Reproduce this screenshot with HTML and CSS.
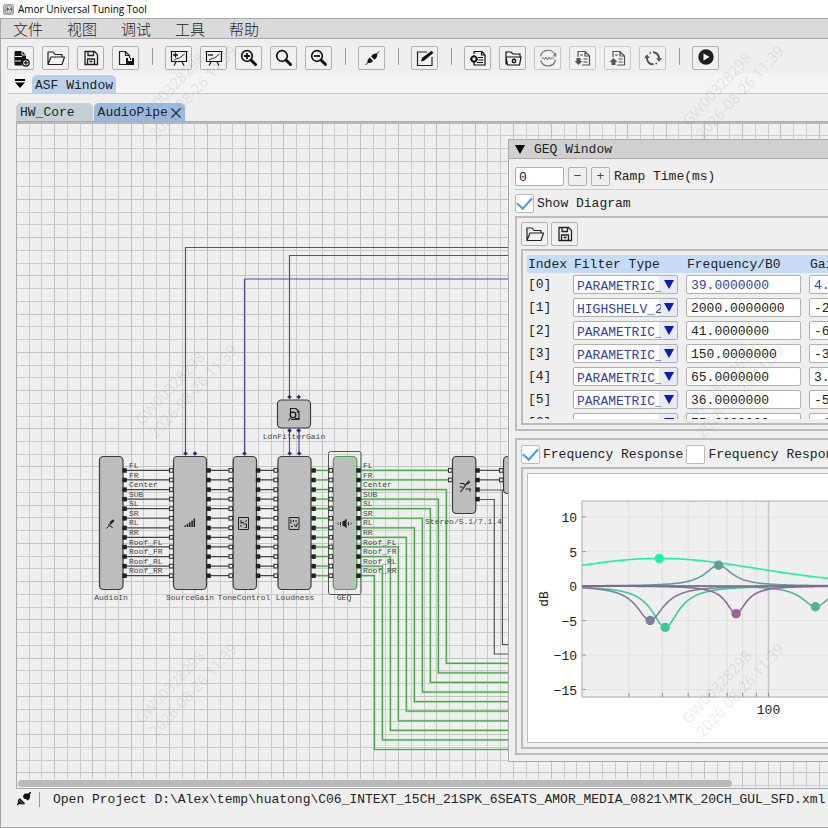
FILE: index.html
```html
<!DOCTYPE html>
<html lang="zh-CN">
<head>
<meta charset="utf-8">
<title>Amor Universal Tuning Tool</title>
<link rel="stylesheet" href="styles.css">
</head>
<body>
<header class="titlebar">
  <svg class="app-icon" viewBox="0 0 12 12"><rect x=".5" y=".5" width="11" height="11" rx="2" fill="#c4c4c4" stroke="#999"/><circle cx="6" cy="6" r="4.2" fill="#e8e8e8" stroke="#888"/><path d="M2.5 8 5 4v4m0-4 2 3 2-3v4" fill="none" stroke="#555"/></svg>
  <h1>Amor Universal Tuning Tool</h1>
</header>
<div class="app">
  <nav class="menubar">
    <button>文件</button><button>视图</button><button>调试</button><button>工具</button><button>帮助</button>
  </nav>
  <div class="toolbar">
    <button class="tool" aria-label="New"><svg viewBox="0 0 20 20"><path d="M3.500 4Q3.500 3 4.500 3H11l4 4v4.500a4.500 4.500 0 0 0-4 6H4.500q-1 0-1-1Z" fill="#111"/><path d="M11 3v4h4M4 8.500h7M4 13h6" stroke="#efefef" fill="none"/><circle cx="14.800" cy="14.800" r="3.300" fill="#efefef" stroke="#111" stroke-width="1.300"/><path d="M12.800 14.800h4m-2-2v4" stroke="#111" stroke-width="1.200"/></svg></button>
    <button class="tool" aria-label="Open"><svg viewBox="0 0 20 20"><use href="#folder"/></svg></button>
    <button class="tool" aria-label="Save"><svg viewBox="0 0 20 20"><use href="#disk"/></svg></button>
    <button class="tool" aria-label="Save as"><svg viewBox="0 0 20 20"><path d="M10 16.500H3.500v-13h6l4 4V10M9.500 3.500v4h4" fill="none" stroke="#222" stroke-width="1.200"/><path d="M10 10h2v3h4v-3h2v7h-8Z" fill="#111"/><path d="M14 10h1.200v2H14z" fill="#111"/></svg></button>
    <span class="sep"></span>
    <button class="tool" aria-label="Add chart"><svg viewBox="0 0 20 20"><use href="#board"/><path d="M4 7h5M6.500 4.500v5" stroke="#111" stroke-width="1.300"/></svg></button>
    <button class="tool" aria-label="Remove chart"><svg viewBox="0 0 20 20"><use href="#board"/><path d="M4 7h5" stroke="#111" stroke-width="1.300"/></svg></button>
    <button class="tool" aria-label="Zoom in"><svg viewBox="0 0 20 20"><use href="#lens"/><path d="M5 8h6M8 5v6" stroke="#111" stroke-width="1.800"/></svg></button>
    <button class="tool" aria-label="Zoom reset"><svg viewBox="0 0 20 20"><use href="#lens"/></svg></button>
    <button class="tool" aria-label="Zoom out"><svg viewBox="0 0 20 20"><use href="#lens"/><path d="M5 8h6" stroke="#111" stroke-width="1.800"/></svg></button>
    <span class="sep"></span>
    <button class="tool" aria-label="Connect"><svg viewBox="0 0 20 20"><path d="m3.500 17 3-3M14 6.500l3-3" stroke="#111" stroke-width="1"/><path d="M5.500 14.500q-.500-3 2.500-5l3 3.500q-2.500 3-5.500 1.500ZM9 8.300q3-4 6-2.500 1.200 3-2.500 6Z" fill="#111"/></svg></button>
    <span class="sep"></span>
    <button class="tool" aria-label="Edit"><svg viewBox="0 0 20 20"><path d="M12 4H2.500v13.500h14.500V9" fill="none" stroke="#222" stroke-width="1.200"/><path d="m6 13.500 1-3.500L16.500 2.800l2 2L9 12.700Z" fill="#111"/></svg></button>
    <span class="sep"></span>
    <button class="tool" aria-label="Project settings"><svg viewBox="0 0 20 20"><path d="M6 6V3.500h8l3 3.500v10H6v-2M13.500 3.500V7H17M10 9.500h5M10.500 12h5M9 14.500h6" fill="none" stroke="#111" stroke-width="1.200"/><circle cx="6" cy="11" r="2.600" fill="none" stroke="#111" stroke-width="1.800"/><path d="M6 7v1.500M6 13.500V15M2 11h1.500M8.500 11H10" stroke="#111" stroke-width="1.500"/></svg></button>
    <button class="tool" aria-label="Folder settings"><svg viewBox="0 0 20 20"><path d="M3 16.500V4h5l2 2h7v3M3 9h15l-1.500 8H4.500Z" fill="none" stroke="#111" stroke-width="1.200"/><circle cx="11" cy="13" r="1.700" fill="none" stroke="#111" stroke-width="1.400"/></svg></button>
    <button class="tool dim" aria-label="Sweep"><svg viewBox="0 0 20 20"><path d="M2.500 8.500a7.600 7.600 0 0 1 14.700-1M17.500 12A7.600 7.600 0 0 1 2.800 12.500M17.700 5v3h-3" fill="none" stroke="#222" stroke-width="1.200"/><path d="M3.500 11 5 9.500l1.500 2L8 9l1.500 3L11 9l1.500 2.500L14 9.500l2 2" fill="none" stroke="#222"/></svg></button>
    <button class="tool mid" aria-label="Import"><svg viewBox="0 0 20 20"><use href="#sheet"/><path d="M3.500 10h4v3h2L5.500 17l-4-4h2Z" fill="#111"/></svg></button>
    <button class="tool mid" aria-label="Export"><svg viewBox="0 0 20 20"><use href="#sheet"/><path d="M3.500 17h4v-3h2L5.500 10l-4 4h2Z" fill="#111"/></svg></button>
    <button class="tool mid" aria-label="Refresh"><svg viewBox="0 0 20 20"><path d="M10 4.300a6 6 0 0 1 6 6.500M4 9.500a6 6 0 0 0 6.500 6.800" fill="none" stroke="#111" stroke-width="2"/><path d="m13 10.500 6-.500-2.800 3.800ZM7 9.800l-6 .500 2.800-3.800Z" fill="#111"/><path d="M6.500 5.500 8 4.700M12.500 16l1.500-.800" stroke="#111" stroke-width="1.500"/></svg></button>
    <span class="sep"></span>
    <button class="tool" aria-label="Run"><svg viewBox="0 0 20 20"><circle cx="10" cy="9" r="7.700" fill="#1d2023"/><path d="M7.500 5.500 13.500 9l-6 3.500Z" fill="#fff"/></svg></button>
  </div>
  <div class="dockbar">
    <svg class="collapse" viewBox="0 0 10 12"><path d="M0 1h10v2H0zM0 4.500h10L5 10Z"/></svg>
    <button class="dock-tab">ASF Window</button>
  </div>
  <div class="tabs">
    <button class="tab">HW_Core</button>
    <button class="tab active">AudioPipe<svg viewBox="0 0 10 10"><path d="m.500.500 9 9m0-9-9 9" stroke="#222" stroke-width="1.100"/></svg></button>
  </div>
  <main class="canvas">
    <svg class="graph" id="graph" role="img" aria-label="Audio pipeline"></svg>
    <section class="window">
      <h2 class="window-title"><svg viewBox="0 0 10 9"><path d="M0 0h10L5 9Z"/></svg>GEQ Window</h2>
      <div class="window-body">
        <div class="line ramp">
          <input class="field ramp-input" id="ramp" value="0">
          <button class="step" aria-label="Decrease">−</button>
          <button class="step" aria-label="Increase">+</button>
          <label for="ramp">Ramp Time(ms)</label>
        </div>
        <div class="line show"><input type="checkbox" id="show" checked><label for="show">Show Diagram</label></div>
        <div class="panel">
          <div class="line files">
            <button class="tool" aria-label="Open preset"><svg viewBox="0 0 20 20"><use href="#folder"/></svg></button>
            <button class="tool" aria-label="Save preset"><svg viewBox="0 0 20 20"><use href="#disk"/></svg></button>
          </div>
          <div class="panel inner">
            <div class="scroller">
              <table class="filters">
                <colgroup><col class="c-index"><col class="c-type"><col class="c-freq"><col class="c-gain"></colgroup>
                <thead><tr><th>Index</th><th>Filter Type</th><th>Frequency/B0</th><th>Gain/B1</th></tr></thead>
                <tbody id="rows"></tbody>
              </table>
            </div>
          </div>
        </div>
        <div class="panel second">
          <div class="line responses">
            <input type="checkbox" id="fr1" checked><label for="fr1">Frequency Response</label>
            <input type="checkbox" id="fr2"><label for="fr2">Frequency Response</label>
          </div>
          <div class="panel inner">
            <svg class="plot" id="plot" role="img" aria-label="Frequency response"></svg>
          </div>
        </div>
      </div>
    </section>
    <div class="scrollbar"></div>
  </main>
  <footer class="status">
    <svg viewBox="0 0 14 14"><path d="m0 13 3-3M11 3l3-3" stroke="#111" stroke-width="1.500"/><path d="M1 12V7l5.500 5.500ZM8 1.500h5v5L7.500 7 6 5Z" fill="#111"/><path d="m1.500 7 1.500-.800 5 5-1 1.500ZM6 4l1.500-2 5 5-2 1.500Z" fill="#111"/></svg>
    <span class="status-sep"></span>
    <p>Open Project D:\Alex\temp\huatong\C06_INTEXT_15CH_21SPK_6SEATS_AMOR_MEDIA_0821\MTK_20CH_GUL_SFD.xml Success</p>
  </footer>
</div>
<svg class="watermark" id="watermark" aria-hidden="true"></svg>
<svg class="defs" aria-hidden="true">
  <symbol id="folder" viewBox="0 0 20 20"><path d="M2 16V4h5l2 2.500h7V9M2 16.500 5 9h13.500l-2.500 7.500Z" fill="none" stroke="#222" stroke-width="1.200" stroke-linejoin="round"/></symbol>
  <symbol id="disk" viewBox="0 0 20 20"><path d="M4 3.500h9.500l3 3v10H4ZM7 3.500v4h5.500v-4M6.500 16.500V11h7v5.500M8.500 13.500h3" fill="none" stroke="#222" stroke-width="1.300"/></symbol>
  <symbol id="board" viewBox="0 0 20 20"><path d="M2.500 3.500h15v10h-15ZM1.500 3.500h17M7 14l-2 3.500M13 14l2 3.500" fill="none" stroke="#111" stroke-width="1.200"/><path d="m5 12 3-1.500 2.500-.500L15.500 6" fill="none" stroke="#333"/></symbol>
  <symbol id="lens" viewBox="0 0 20 20"><circle cx="8" cy="8" r="5.300" fill="none" stroke="#111" stroke-width="1.700"/><path d="m12 12 4.500 4.500" stroke="#111" stroke-width="3" stroke-linecap="round"/></symbol>
  <symbol id="sheet" viewBox="0 0 20 20"><path d="M5 9V3.500h7L16.500 8v9H9M12 3.500V8h4.500M7 7h3M10.500 11h4M10.500 14h4" fill="none" stroke="#111" stroke-width="1.200"/></symbol>
</svg>
<script src="app.js"></script>
</body>
</html>
```
FILE: styles.css
```css
:root {
  --mono: "Liberation Mono", "Noto Sans CJK SC", monospace;
  --line: #b0b0b0;
  --bg: #efefef;
}
* { box-sizing: border-box; }
body {
  margin: 0;
  height: 100vh;
  display: flex;
  flex-direction: column;
  overflow: hidden;
  background: var(--bg);
  color: #222;
  font: 13px/18px var(--mono);
}
button, input, select { font: inherit; color: inherit; margin: 0; padding: 0; border-radius: 2px; }
h1, h2, p { margin: 0; font: inherit; white-space: nowrap; }
svg { display: block; flex: none; }
.defs { position: absolute; width: 0; height: 0; }

.titlebar { flex: none; height: 18px; display: flex; align-items: center; gap: 4px; padding-left: 3px; background: #fff; }
.titlebar h1 { font: 10px/18px "Open Sans", sans-serif; color: #000; }
.app-icon { width: 11px; height: 11px; }

.app { flex: 1; min-height: 0; display: flex; flex-direction: column; border: 1px solid #a8a8a8; border-right: 0; }
.menubar { flex: none; height: 20px; display: flex; gap: 24px; padding-left: 12px; background: #dadada; border-bottom: 1px solid #a8a8a8; }
.menubar button { border: 0; background: none; font: 300 15px/19px "Noto Sans CJK SC", sans-serif; }

.toolbar { flex: none; display: flex; gap: 8px; height: 35px; padding: 7px 0 0 6px; }
.tool { flex: none; width: 27px; height: 24px; display: grid; place-items: center; background: #f1f1f1; border: 1px solid var(--line); }
.tool svg { width: 20px; height: 20px; }
.tool.dim svg { opacity: .6; }
.tool.mid svg { opacity: .7; }
.tool.dim, .tool.mid { border-color: #c8c8c8; }
.sep { flex: none; width: 10px; height: 17px; margin-top: 2px; background: linear-gradient(#999, #999) center / 1px 100% no-repeat; }

.dockbar { flex: none; height: 20px; margin-left: 7px; display: flex; align-items: flex-end; background: #f4f4f4; border-bottom: 1px solid #b9cbdf; }
.collapse { width: 10px; height: 12px; margin: 0 7px 3px; }
.dock-tab { height: 18px; padding: 2px 3px 0; background: #bad0ea; border: 0; border-radius: 5px 5px 0 0; }
.tabs { flex: none; height: 28px; margin-left: 15px; display: flex; gap: 1px; align-items: flex-end; border-bottom: 1px solid #8fb3dc; }
.tab { height: 18px; padding: 2px 4px 0; background: #c6ced6; border: 0; border-radius: 5px 5px 0 0; display: flex; align-items: center; gap: 3px; }
.tab:first-child { padding-right: 18px; }
.tab.active { background: #98badf; }
.tab svg { width: 10px; height: 10px; }

.canvas { flex: 1; min-height: 0; position: relative; overflow: hidden; margin-left: 15px; border: 1px solid #aaa; border-top: 2px solid #b8b8b8; border-right: 0; }
.graph { width: 100%; height: 100%; }
.graph text { font: 8px var(--mono); fill: #444; }
.scrollbar { position: absolute; left: 1px; bottom: 1px; width: 88%; height: 7px; border-radius: 4px; background: #b9b9b9; box-shadow: 0 0 0 1px var(--bg); }

.window { position: absolute; top: 15px; left: 491px; right: -8px; background: var(--bg); border: 1px solid #aaa; }
.window-title { height: 19px; display: flex; align-items: center; gap: 9px; padding: 2px 0 0 6px; background: #d0d0d0; border-bottom: 1px solid #aaa; }
.window-title svg { width: 10px; height: 9px; margin-bottom: 2px; }
.window-body { padding: 7px 0 6px 6px; white-space: nowrap; overflow: hidden; }
.line { display: flex; align-items: center; }
.ramp { gap: 4px; padding-bottom: 3px; margin-bottom: 3px; border-bottom: 1px solid #ccc; }
.field { width: 100%; height: 19px; padding: 2px 0 0 4px; background: #fff; border: 1px solid var(--line); display: block; }
.ramp-input { width: 49px; padding-left: 3px; }
.step { width: 19px; height: 19px; line-height: 17px; background: var(--bg); border: 1px solid var(--line); color: #444; }
.line label { padding-top: 2px; }
.show { gap: 3px; }
.responses { gap: 3px; }
input[type="checkbox"] { appearance: none; flex: none; width: 19px; height: 19px; background: #fff; border: 1px solid #bbb; display: grid; place-items: center; }
input[type="checkbox"]:checked::before { content: ""; width: 13px; height: 7px; margin-top: -4px; border: solid #4796ea; border-width: 0 0 2px 2px; transform: rotate(-48deg); }
.panel { border: 2px solid #bbb; border-right: 0; padding: 4px 0 4px 4px; margin-top: 3px; }
.files { gap: 3px; }
.panel .inner { padding: 4px 0 4px 4px; }
.second { margin-top: 7px; }
.scroller { height: 164px; overflow: hidden; }

.filters { table-layout: fixed; width: 420px; border-collapse: collapse; }
.c-index { width: 46px; }
.c-type { width: 113px; }
.c-freq { width: 123px; }
.filters th, .filters td { padding: 0; text-align: left; font-weight: normal; }
.filters th { height: 18px; padding: 1px 0 0 1px; line-height: 17px; background: #c5dbf6; }
.filters td { height: 23px; padding-bottom: 2px; vertical-align: bottom; }
.filters td:first-child { padding-left: 1px; }
.combo { position: relative; width: 105px; height: 19px; }
.combo::after { content: ""; position: absolute; top: 5px; right: 4px; border: solid transparent; border-width: 9px 5px 0; border-top-color: #0d1cb4; pointer-events: none; }
.combo select { appearance: none; width: 105px; height: 19px; padding: 2px 16px 0 3px; border: 1px solid var(--line); background: linear-gradient(90deg, #fff 85px, #e9ebf4 85px); color: #3540a8; }
.filters .field { width: 115px; }
.first .field { color: #3540a8; }

.plot { width: 100%; height: 270px; background: #fff; border: 1px solid #bbb; border-right: 0; border-radius: 2px 0 0 2px; }
.plot text { font: 13px var(--mono); fill: #222; }

.status { flex: none; height: 38px; display: flex; align-items: flex-start; gap: 8px; padding: 1px 0 0 16px; overflow: hidden; }
.status svg { width: 14px; height: 14px; margin-top: 2px; }
.status-sep { flex: none; width: 1px; height: 15px; margin-top: 2px; background: #999; }
.status p { padding: 1px 0 0 5px; }
.watermark { position: fixed; inset: 0; width: 100%; height: 100%; pointer-events: none; }
.watermark text { font: 15px "Noto Sans", sans-serif; fill: #777; fill-opacity: .14; }
```
FILE: app.js
```js
const NS = 'http://www.w3.org/2000/svg';
function add(parent, name, attrs, text) {
  const el = document.createElementNS(NS, name);
  for (const key in attrs) el.setAttribute(key, attrs[key]);
  if (text !== undefined) el.textContent = text;
  parent.appendChild(el);
  return el;
}

/* ---- pipeline graph ---- */
const g = add(document.getElementById('graph'), 'g', { transform: 'translate(-17 -124)' });
const STEP = 12.74;
for (let i = 1; i < 200; i++) {
  const x = Math.round(16.9 + i * STEP), y = Math.round(123.5 + i * STEP);
  add(g, 'path', { d: `M${x - .5} 124V2000M17 ${y - .5}H2600`, stroke: i % 3 ? '#cbcbcb' : '#c3c3c3', fill: 'none' });
}
const portY = i => 470.4 + i * 9.57;
const wire = (d, color) => {
  if (color === '#4aa84a') add(g, 'path', { d, stroke: '#9bd89b', 'stroke-width': 2.6, 'stroke-opacity': .55, fill: 'none' });
  add(g, 'path', { d, stroke: color, 'stroke-width': 1.2, fill: 'none' });
};
const GREEN = '#4aa84a', DARK = '#444', BLUE = '#50508a';
const names = ['FL', 'FR', 'Center', 'SUB', 'SL', 'SR', 'RL', 'RR', 'Roof_FL', 'Roof_FR', 'Roof_RL', 'Roof_RR'];

wire('M185.500 453V247.500H2600', BLUE);
wire('M289.500 397V255.500H2600', BLUE);
wire('M244.500 453V279H2600', BLUE);
wire('M289.500 430V453M299 430V453', BLUE);
for (let i = 0; i < 12; i++) {
  const y = portY(i);
  wire(`M126 ${y}H170M210 ${y}H230M260 ${y}H275`, DARK);
  wire(`M314 ${y}H330`, GREEN);
  if (i < 2) wire(`M360 ${y}H450`, GREEN);
  else wire(`M360 ${y}H${446.4 - (i - 2) * 8}V${663.3 + (i - 2) * 9.58}H2600`, GREEN);
}
wire(`M478 ${portY(0)}H502M478 ${portY(1)}H502M478 490H502.400V644.500H2600M478 499.500H494.300V654H2600`, '#555');

function node(x, y, w, h, label, lx, ly, stroke = '#3c3c3c') {
  add(g, 'rect', { x, y, width: w, height: h, rx: 4, fill: '#bdbdbd', stroke, 'stroke-width': 1.2 });
  if (label) add(g, 'text', { x: lx, y: ly, 'text-anchor': 'middle' }, label);
}
add(g, 'rect', { x: 328.5, y: 451.500, width: 32.5, height: 143, rx: 2, fill: 'none', stroke: '#555' });
node(99.5, 456.5, 23.500, 133, 'AudioIn', 111, 600);
node(173.500, 456.5, 33, 133, 'SourceGain', 190, 600);
node(233.200, 456.5, 23.300, 133, 'ToneControl', 244, 600);
node(278, 456.5, 33, 133, 'Loudness', 295, 600);
node(333.300, 456.5, 23.500, 133, 'GEQ', 344, 600, '#44a544');
node(452.500, 456.500, 23.300, 57, 'Stereo/5.1/7.1.4', 463.500, 524);
node(503.500, 456.500, 33, 37);
node(277.500, 400, 33, 28, 'LdnFilterGain', 294, 439);

const outPort = (x, y) => add(g, 'rect', { x: x - .2, y: y - 2.2, width: 4.500, height: 4.500, fill: '#222' });
const inPort = (x, y) => add(g, 'rect', { x: x - 4, y: y - 1.800, width: 3.600, height: 3.600, fill: '#f4f4f4', stroke: '#333', 'stroke-width': 1.1 });
for (let i = 0; i < 12; i++) {
  const y = portY(i);
  [122.5, 206.500, 256, 311.500, 356.500].forEach(x => outPort(x, y));
  [173.500, 233, 278, 333].forEach(x => inPort(x, y));
  add(g, 'text', { x: 129, y: y - 2.400 }, names[i]);
  add(g, 'text', { x: 363, y: y - 2.400 }, names[i]);
  if (i < 4) outPort(475.5, y);
  if (i < 2) { inPort(452.5, y); inPort(503.500, y); }
}
[[185.500, 453.5], [195, 453.5], [244.500, 453.5], [289.5, 397], [298.7, 397], [289.5, 430.5], [298.7, 430.5], [289.7, 453.5], [299.2, 453.5]]
  .forEach(([x, y]) => add(g, 'path', { d: `M${x - 2.300} ${y}l2.300-2.300 2.300 2.300-2.300 2.300Z`, fill: y === 430.5 ? '#1f1fb0' : '#30307c' }));

const glyph = (d, w = 1.1, fill = 'none') => add(g, 'path', { d, stroke: '#222', 'stroke-width': w, fill });
glyph('M106.500 528.500l2.500-3M110 522.500l2.500-2.500q1.500-.500 1.500 1l-3.500 3.500ZM108.500 524q.500 2.500 3 2.500l1 1.500', 1, '#222');
glyph('M185.200 527v-1.800M187.500 527v-3.200M189.800 527v-4.800M192.100 527v-6.500M194.300 527v-8.500', 1.5);
glyph('M238.500 517.500h10v12h-10ZM241 520v2.500h3M246 520v2M241 525v2M243.500 524h3v3.500h-2M240.500 523h2', 1);
glyph('M289 517.500h10v12h-10ZM291 519.500v4M293.500 520v2M291 526.500h2M294 524l2 3 1.500-4M296 520v2', 1);
glyph('M343 521.500v4M343 521.500h1.500l1.500-1.500v7l-1.500-1.500h-1.500', 1.2, '#222');
glyph('M338.500 522.500l-1 1 1 1M340.500 522v3.500M348.500 522v3.500M350.500 522.500l1 1-1 1', .9);
glyph('M460.500 492l8.500-11.500M460 483.500h3.500l2 2M459.500 487h3.500M467 484l3-2M465.500 489h4.500v2.500', 1.2);
glyph('M290.500 413v-4.500h5.500l3 3v8h-8M288.500 420.500l2-2.500M295 418.500h3.500M296.500 412h2.500', 1.2);
add(g, 'circle', { cx: 293, cy: 415, r: 2.800, fill: 'none', stroke: '#111', 'stroke-width': 1.3 });

/* ---- filter rows ---- */
const rows = [
  ['PARAMETRIC_2', '39.0000000', '4.0000000'], ['HIGHSHELV_2', '2000.0000000', '-2.0000000'],
  ['PARAMETRIC_2', '41.0000000', '-6.0000000'], ['PARAMETRIC_2', '150.0000000', '-3.0000000'],
  ['PARAMETRIC_2', '65.0000000', '3.0000000'], ['PARAMETRIC_2', '36.0000000', '-5.0000000'],
  ['PARAMETRIC_2', '75.0000000', '-4.0000000']
];
document.getElementById('rows').innerHTML = rows.map(([type, freq, gain], i) => `
  <tr class="${i ? '' : 'first'}"><td>[${i}]</td>
  <td><div class="combo"><select aria-label="Filter type ${i}"><option>${type}</option></select></div></td>
  <td><input class="field" aria-label="Frequency ${i}" value="${freq}"></td>
  <td><input class="field" aria-label="Gain ${i}" value="${gain}"></td></tr>`).join('');

/* ---- frequency response ---- */
const plot = document.getElementById('plot');
const LEFT = 54, ZERO = 112, TOP = 27, BOTTOM = 223, DB = 6.9, DECADE = 266.8;
const fx = f => LEFT + DECADE * Math.log10(f / 20);
const dy = v => ZERO - v * DB;
add(plot, 'rect', { x: LEFT, y: TOP, width: 2000, height: BOTTOM - TOP, fill: '#efefef' });
for (let v = 10; v >= -15; v -= 5) {
  add(plot, 'path', { d: `M${LEFT} ${dy(v)}H2000`, stroke: '#e2e2e2' });
  add(plot, 'path', { d: `M${LEFT} ${dy(v)}h4`, stroke: '#999' });
  add(plot, 'text', { x: 49, y: dy(v) + 5, 'text-anchor': 'end' }, String(v).replace('-', '−'));
}
[30, 40, 50, 60, 70, 80, 90, 100, 200].forEach(f => {
  add(plot, 'path', { d: `M${fx(f)} ${TOP}V${BOTTOM}`, stroke: f === 100 ? '#c6c6c6' : '#dedede', 'stroke-width': f === 100 ? 1.5 : 1 });
  add(plot, 'path', { d: `M${fx(f)} ${BOTTOM}v-4`, stroke: '#888' });
});
add(plot, 'path', { d: `M2000 ${TOP}H${LEFT}V${BOTTOM}H2000`, stroke: '#aaa', fill: 'none' });
add(plot, 'text', { x: fx(100), y: 240, 'text-anchor': 'middle' }, '100');
add(plot, 'text', { transform: 'translate(20 125) rotate(-90)', 'text-anchor': 'middle' }, 'dB');
const bands = [[39, 4, .4, '#16f5a0'], [41, -6, 3.5, '#3cca98'], [150, -3, 3.5, '#50b498'], [65, 3, 3.5, '#649c98'], [36, -5, 3.5, '#827f9a'], [75.6, -4, 4.8, '#966498']];
bands.forEach(([f0, gain, q, color]) => {
  const a = 10 ** (gain / 40), pts = [];
  for (let x = LEFT; x < 1400; x++) {
    const w = 20 * 10 ** ((x - LEFT) / DECADE) / f0, c = (1 - w * w) ** 2;
    const db = 10 * Math.log10((c + (a * w / q) ** 2) / (c + (w / a / q) ** 2));
    pts.push(`${x},${dy(db).toFixed(2)}`);
  }
  add(plot, 'polyline', { points: pts.join(' '), fill: 'none', stroke: color, 'stroke-width': 1.6 });
  add(plot, 'circle', { cx: fx(f0), cy: dy(gain), r: 4.7, fill: color });
});
add(plot, 'path', { d: `M${LEFT} ${ZERO}H2000`, stroke: '#7a6a90', 'stroke-width': 1.6 });

/* ---- tiled watermark ---- */
const mark = document.getElementById('watermark');
for (let row = 0; row < 6; row++) for (let col = 0; col < 4; col++) {
  const t = add(mark, 'g', { transform: `translate(${142 + col * 547} ${127 + row * 299}) rotate(-47)` });
  add(t, 'text', {}, 'GW00328298');
  add(t, 'text', { y: 19 }, '2026-08-26 11:39');
}
```
